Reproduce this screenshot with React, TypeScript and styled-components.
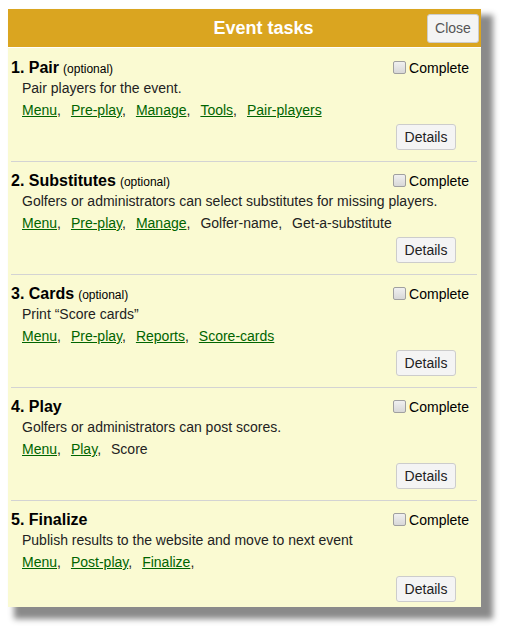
import React from "react";
import styled, { createGlobalStyle } from "styled-components";

const Global = createGlobalStyle`
  html, body { margin: 0; padding: 0; background: #fff; }
  body { font-family: "Liberation Sans", Arial, sans-serif; }
`;

const Page = styled.div`
  padding: 9px 0 30px 8px;
`;

const Panel = styled.div`
  width: 473px;
  background: #fafad2;
  box-shadow: 9px 9px 6px 3px #8a8a8a;
`;

const Header = styled.div`
  height: 38px;
  background: #daa520;
  border-bottom: 1px solid #fff;
  display: flex;
  align-items: center;
  padding: 0 2px 0 0;
`;

const Title = styled.div`
  flex: 1;
  text-align: center;
  padding-left: 92px;
  color: #fff;
  font-weight: bold;
  font-size: 18px;
`;

const CloseButton = styled.button`
  height: 29px;
  width: 52px;
  padding: 0;
  font-family: "Liberation Sans", Arial, sans-serif;
  font-size: 14px;
  color: #555;
  background: #f4f4f4;
  border: 1px solid #ccc;
  border-radius: 3px;
`;

const Body = styled.div`
  padding: 1px 4px 0 3px;
`;

const Section = styled.div`
  padding: 9px 8px 11px 0;
  border-bottom: 1px solid #d3d3d3;
  &:last-child {
    border-bottom: none;
    padding-bottom: 5px;
  }
`;

const TopRow = styled.div`
  display: flex;
  align-items: baseline;
  justify-content: space-between;
  height: 20px;
  line-height: 20px;
`;

const TaskName = styled.span`
  font-size: 16px;
  font-weight: bold;
  color: #000;
`;

const Optional = styled.span`
  font-size: 12px;
  font-weight: normal;
  margin-left: 4px;
`;

const CompleteLabel = styled.label`
  display: flex;
  align-items: baseline;
  font-size: 14px;
  color: #000;
`;

const Check = styled.input`
  appearance: none;
  width: 13px;
  height: 13px;
  margin: 0 3px 0 0;
  border: 1px solid #a0a0a0;
  border-radius: 2px;
  background: linear-gradient(#f0f0f0, #d8d8d8);
  position: relative;
  top: 1px;
`;

const Desc = styled.div`
  padding-left: 11px;
  font-size: 14px;
  line-height: 21px;
  color: #222;
`;

const Links = styled.div`
  padding-left: 11px;
  font-size: 14px;
  line-height: 22px;
  color: #222;
`;

const Item = styled.span`
  margin-right: 10px;
`;

const Link = styled.a`
  color: #006400;
  text-decoration: underline;
  cursor: pointer;
`;

const ButtonRow = styled.div`
  display: flex;
  justify-content: flex-end;
  margin-top: 3px;
  padding-right: 13px;
`;

const DetailsButton = styled.button`
  height: 26px;
  width: 60px;
  padding: 0;
  font-family: "Liberation Sans", Arial, sans-serif;
  font-size: 14px;
  color: #222;
  background: #f4f4f4;
  border: 1px solid #ccc;
  border-radius: 3px;
`;

type Ref = { text: string; link: boolean; comma: boolean };

type Task = {
  name: string;
  optional: boolean;
  desc: string;
  refs: Ref[];
};

const L = (text: string, comma = true): Ref => ({ text, link: true, comma });
const T = (text: string, comma = true): Ref => ({ text, link: false, comma });

const tasks: Task[] = [
  {
    name: "1. Pair",
    optional: true,
    desc: "Pair players for the event.",
    refs: [L("Menu"), L("Pre-play"), L("Manage"), L("Tools"), L("Pair-players", false)],
  },
  {
    name: "2. Substitutes",
    optional: true,
    desc: "Golfers or administrators can select substitutes for missing players.",
    refs: [L("Menu"), L("Pre-play"), L("Manage"), T("Golfer-name"), T("Get-a-substitute", false)],
  },
  {
    name: "3. Cards",
    optional: true,
    desc: "Print \u201cScore cards\u201d",
    refs: [L("Menu"), L("Pre-play"), L("Reports"), L("Score-cards", false)],
  },
  {
    name: "4. Play",
    optional: false,
    desc: "Golfers or administrators can post scores.",
    refs: [L("Menu"), L("Play"), T("Score", false)],
  },
  {
    name: "5. Finalize",
    optional: false,
    desc: "Publish results to the website and move to next event",
    refs: [L("Menu"), L("Post-play"), L("Finalize")],
  },
];

export default function App() {
  return (
    <>
      <Global />
      <Page>
        <Panel>
          <Header>
            <Title>Event tasks</Title>
            <CloseButton>Close</CloseButton>
          </Header>
          <Body>
            {tasks.map((t) => (
              <Section key={t.name}>
                <TopRow>
                  <TaskName>
                    {t.name}
                    {t.optional && <Optional>(optional)</Optional>}
                  </TaskName>
                  <CompleteLabel>
                    <Check type="checkbox" />
                    Complete
                  </CompleteLabel>
                </TopRow>
                <Desc>{t.desc}</Desc>
                <Links>
                  {t.refs.map((r, i) => (
                    <Item key={i}>
                      {r.link ? <Link>{r.text}</Link> : r.text}
                      {r.comma ? "," : ""}
                    </Item>
                  ))}
                </Links>
                <ButtonRow>
                  <DetailsButton>Details</DetailsButton>
                </ButtonRow>
              </Section>
            ))}
          </Body>
        </Panel>
      </Page>
    </>
  );
}
